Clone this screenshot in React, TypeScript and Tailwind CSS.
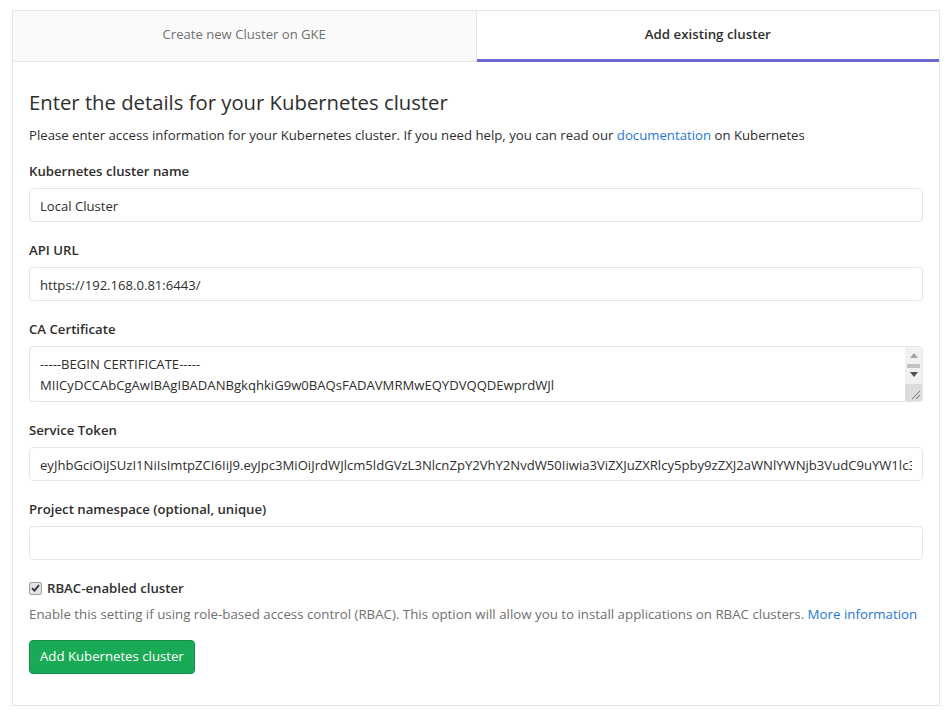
const cert = `-----BEGIN CERTIFICATE-----
MIICyDCCAbCgAwIBAgIBADANBgkqhkiG9w0BAQsFADAVMRMwEQYDVQQDEwprdWJl
cm5ldGVzMB4XDTE4MDYxMzExMjUyOFoXDTI4MDYxMDExMjUyOFowFTETMBEGA1UE
AxMKa3ViZXJuZXRlczCCASIwDQYJKoZIhvcNAQEBBQADggEPADCCAQoCggEBAMmY
-----END CERTIFICATE-----`

const token =
  'eyJhbGciOiJSUzI1NiIsImtpZCI6IiJ9.eyJpc3MiOiJrdWJlcm5ldGVzL3NlcnZpY2VhY2NvdW50Iiwia3ViZXJuZXRlcy5pby9zZXJ2aWNlYWNjb3VudC9uYW1lc3BhY2UiOiJkZWZhdWx0In0'

const font = { fontFamily: '"Open Sans", "Noto Sans", sans-serif' }

function Field({ label, children }: { label: string; children: React.ReactNode }) {
  return (
    <div className="mb-[18px]">
      <label className="mb-[7px] block text-[13.2px] font-semibold leading-[20px] text-[#2e2e2e]">{label}</label>
      {children}
    </div>
  )
}

const inputCls =
  'block h-[34px] w-full rounded-[4px] border border-[#e5e5e5] bg-white px-[10px] pt-[1px] text-[13.1px] text-[#2e2e2e] outline-none'

// fake classic scrollbar for the certificate textarea
function Scrollbar() {
  return (
    <div className="absolute top-[1px] right-[1px] bottom-[1px] flex w-[17px] flex-col rounded-r-[3px] bg-[#f1f1f1]">
      <div className="flex h-[17px] items-center justify-center">
        <svg width="8" height="5" viewBox="0 0 8 5">
          <path d="M4 0 L8 5 L0 5 Z" fill="#a3a3a3" />
        </svg>
      </div>
      <div className="mx-[2px] h-[4px] bg-[#c1c1c1]" />
      <div className="flex h-[13px] items-center justify-center">
        <svg width="8" height="5" viewBox="0 0 8 5">
          <path d="M0 0 L8 0 L4 5 Z" fill="#505050" />
        </svg>
      </div>
      <div className="flex-1" />
      <div className="flex h-[17px] items-end justify-end bg-[#dcdcdc] pr-[2px] pb-[2px]">
        <svg width="9" height="9" viewBox="0 0 9 9">
          <path d="M9 1 L1 9 M9 5 L5 9" stroke="#777" strokeWidth="1" />
        </svg>
      </div>
    </div>
  )
}

export default function App() {
  return (
    <div className="min-h-[719px] bg-white pt-[10px] pr-[12px] pl-[12px]" style={font}>
      <div className="border border-[#e5e5e5]">
        <div className="flex">
          <div className="flex h-[51px] flex-1 items-center justify-center border-r border-b border-[#e5e5e5] bg-[#fafafa] pb-[2px] text-[13.1px] text-[#707070]">
            Create new Cluster on GKE
          </div>
          <div className="flex h-[51px] flex-1 items-center justify-center border-b-[3px] border-[#6b6bcf] bg-white text-[13.3px] font-semibold text-[#2e2e2e]">
            Add existing cluster
          </div>
        </div>

        <div className="px-[16px] pt-[26px] pb-[31px]">
          <h2 className="mb-[9px] text-[20.3px] leading-[28px] text-[#2e2e2e]">
            Enter the details for your Kubernetes cluster
          </h2>
          <p className="mb-[16px] text-[13.2px] leading-[20px] text-[#2e2e2e]">
            Please enter access information for your Kubernetes cluster. If you need help, you can read our{' '}
            <a className="text-[#1f78d1]">documentation</a> on Kubernetes
          </p>

          <Field label="Kubernetes cluster name">
            <input className={inputCls} defaultValue="Local Cluster" />
          </Field>
          <Field label="API URL">
            <input className={inputCls} defaultValue="https://192.168.0.81:6443/" />
          </Field>
          <Field label="CA Certificate">
            <div className="relative">
              <textarea
                className="block h-[56px] w-full resize-none overflow-hidden rounded-[4px] border border-[#e5e5e5] bg-white pt-[7px] pr-[24px] pb-0 pl-[10px] text-[13.1px] leading-[21px] text-[#2e2e2e] outline-none"
                defaultValue={cert}
                wrap="off"
              />
              <Scrollbar />
            </div>
          </Field>
          <Field label="Service Token">
            <input className={inputCls} defaultValue={token} />
          </Field>
          <Field label="Project namespace (optional, unique)">
            <input className={inputCls} defaultValue="" />
          </Field>

          <div className="flex items-center gap-[5px]">
            <span className="flex h-[13px] w-[13px] items-center justify-center rounded-[2px] border border-[#a0a0a0] bg-[#e3e3e3]">
              <svg width="9" height="8" viewBox="0 0 9 8">
                <path d="M1 4.2 L3.4 6.6 L8 1.2" stroke="#333" strokeWidth="1.8" fill="none" />
              </svg>
            </span>
            <span className="text-[13.2px] font-semibold leading-[20px] text-[#2e2e2e]">RBAC-enabled cluster</span>
          </div>
          <p className="mt-[6px] text-[13.3px] leading-[20px] whitespace-nowrap text-[#707070]">
            Enable this setting if using role-based access control (RBAC). This option will allow you to install
            applications on RBAC clusters. <a className="text-[#1f78d1]">More information</a>
          </p>

          <button className="mt-[16px] h-[34px] rounded-[4px] border border-[#168f48] bg-[#1aaa55] px-[10px] text-[13.2px] text-white">
            Add Kubernetes cluster
          </button>
        </div>
      </div>
    </div>
  )
}
